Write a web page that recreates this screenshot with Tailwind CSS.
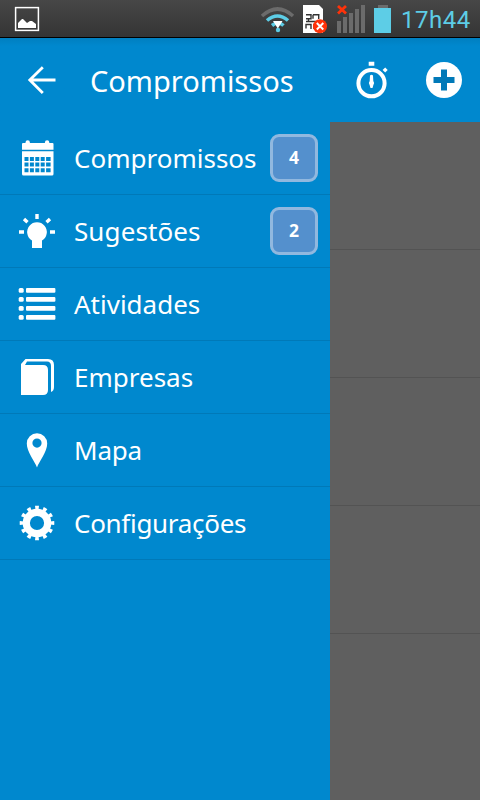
<!DOCTYPE html>
<html lang="pt">
<head>
<meta charset="utf-8">
<title>Compromissos</title>
<script src="https://cdn.jsdelivr.net/npm/@tailwindcss/browser@4"></script>
</head>
<body class="w-[480px] h-[800px] overflow-hidden flex flex-col bg-[#0088ce] text-white font-['Noto_Sans',sans-serif]">
<div class="h-[38px] shrink-0 flex items-center bg-linear-to-b from-[#474747] to-[#343434] border-b border-black">
  <svg class="w-[400px] h-[37px] shrink-0" viewBox="0 0 400 37">
    <rect x="15.600" y="7.600" width="22.800" height="22.800" fill="none" stroke="#fff" stroke-width="1.500"/>
    <path d="M18 28v-5l4-4h1l4 4 3-2h2l4 3v4z" fill="#fff"/>
    <g fill="none" stroke-width="3.600">
      <path d="M262 16q15.500-14 31 0" stroke="#6b6b6b"/>
      <path d="M267 20.500q10.500-9 21 0" stroke="#5dcde6"/>
      <path d="M272 25.500q6-5 11.500 0" stroke="#5dcde6"/>
    </g>
    <circle cx="278" cy="30" r="2.200" fill="#5dcde6"/>
    <path d="M273 21h9.500l-4.700 7.500z" fill="#fff"/>
    <path d="M303 5h16l4 4v24h-20z" fill="#fff"/>
    <path d="M306 14.700h5v4h-5M313 14.700v4M313 14.700h6.500M318.700 14v5M306 21.500h14M306 28.500v-4h5v4.500M314 29v-4.500h4M308.500 18v3.500" fill="none" stroke="#333" stroke-width="1.400"/>
    <circle cx="320" cy="26.300" r="7" fill="#ff3209"/>
    <path d="M316.800 23l6.500 6.500M323.300 23l-6.500 6.500" stroke="#fff" stroke-width="1.900"/>
    <path d="M337 21h4v12h-4zM343 17h4v16h-4zM349 13h4v20h-4zM355 9h4v24h-4zM361 5h4v28h-4z" fill="#6b6b6b"/>
    <path d="M338 6l8 7.500M346 6l-8 7.500" stroke="#ff3209" stroke-width="2.800"/>
    <path d="M378 5h10v3h-10z" fill="#6b6b6b"/>
    <path d="M374 8h17v25h-17z" fill="#5dcde6"/>
  </svg>
  <span class="font-[Roboto] text-[24px] leading-none text-[#5dcde6] whitespace-nowrap ml-[1px] mt-[3px] tracking-[0.5px]">17h44</span>
</div>
<header class="h-[84px] shrink-0 flex items-center bg-linear-to-b from-[#007fc0] to-[#0088ce] to-[8px]">
  <svg class="w-[90px] h-[84px] shrink-0" viewBox="0 38 90 84"><path d="M42.800 67.300L29.800 80l13 12.900M30 80h25.500" fill="none" stroke="#fff" stroke-width="2.800"/></svg>
  <h1 class="w-[250px] text-[29px] leading-none whitespace-nowrap">Compromissos</h1>
  <svg class="w-[140px] h-[84px] shrink-0" viewBox="340 38 140 84">
    <circle cx="371.500" cy="83.200" r="13.100" fill="none" stroke="#fff" stroke-width="4"/>
    <path d="M368.700 61.800h5.600v3.900h-5.600zM370 75.500q1.500-1.500 3 0l.3 5.500q1.800 2.200 0 4.200l-.8 2.800h-2l-.8-2.800q-1.800-2 0-4.200z" fill="#fff"/>
    <path d="M382.600 69.900l2.600-2.500 2.500 2.500-2.500 2.600z" fill="#fff"/>
    <circle cx="444" cy="80" r="18" fill="#fff"/>
    <path d="M444 69.500v21M433.500 80h21" stroke="#0079b8" stroke-width="6"/>
  </svg>
</header>
<main class="flex flex-1 min-h-0">
  <nav class="w-[330px] shrink-0 bg-[#0088ce] text-[26px] leading-none whitespace-nowrap">
    <a class="h-[73px] flex items-center border-b border-[#0079b8]">
      <svg class="w-[74px] h-[72px] shrink-0" viewBox="0 122 74 72">
        <path d="M22 149.800v-5.800q0-1 1-1h2.500v-.5a2.200 2.200 0 0 1 4.400 0v.5h15v-.5a2.200 2.200 0 0 1 4.400 0v.5h3.200q1 0 1 1v5.800zM22 151.300h31.500v22.700q0 1.500-1.500 1.500h-28.500q-1.500 0-1.500-1.500z" fill="#fff"/>
        <g fill="#0088ce">
          <path id="cells" d="M24.500 157h4v4h-4zM29.900 157h4v4h-4zM35.300 157h4v4h-4zM40.700 157h4v4h-4zM46.100 157h4.500v4h-4.500z"/>
          <use href="#cells" y="5.500"/><use href="#cells" y="11.300"/>
        </g>
      </svg>
      <span>Compromissos</span>
      <b class="ml-auto mr-[12px] size-[48px] rounded-[9px] border-[3px] border-[#91b8df] bg-[#5490cd] flex items-center justify-center text-[17.5px]">4</b>
    </a>
    <a class="h-[73px] flex items-center border-b border-[#0079b8]">
      <svg class="w-[74px] h-[72px] shrink-0" viewBox="0 195 74 72">
        <path d="M32 248v-7.500a9.800 9.800 0 1 1 10 0v7.500z" fill="#fff"/>
        <path d="M37 214v5M19 232h5M50 232h5M24 219l3.500 3.200M50 219l-3.500 3.200" stroke="#fff" stroke-width="3.400"/>
      </svg>
      <span class="tracking-[0.1px]">Sugestões</span>
      <b class="ml-auto mr-[12px] size-[48px] rounded-[9px] border-[3px] border-[#91b8df] bg-[#5490cd] flex items-center justify-center text-[17.5px]">2</b>
    </a>
    <a class="h-[73px] flex items-center border-b border-[#0079b8]">
      <svg class="w-[74px] h-[72px] shrink-0" viewBox="0 268 74 72" fill="#fff">
        <g id="line"><rect x="18.700" y="288" width="5" height="4.800" rx="1.500"/><rect x="26" y="288" width="29.400" height="4.800" rx="1"/></g>
        <use href="#line" y="9"/><use href="#line" y="18"/><use href="#line" y="27"/>
      </svg>
      <span>Atividades</span>
    </a>
    <a class="h-[73px] flex items-center border-b border-[#0079b8]">
      <svg class="w-[74px] h-[72px] shrink-0" viewBox="0 341 74 72">
        <path d="M21 395v-31l4.500-5h22.500q6 0 6 6v22q0 4-3 5v-26q0-4.500-4-4.500h-20l-2 3.500h18q5 0 5 5v20q0 5-5 5z" fill="#fff"/>
      </svg>
      <span>Empresas</span>
    </a>
    <a class="h-[73px] flex items-center border-b border-[#0079b8]">
      <svg class="w-[74px] h-[72px] shrink-0" viewBox="0 414 74 72">
        <path fill-rule="evenodd" d="M37 467.500c-2-6-10.200-15.500-10.200-24a10.200 10.200 0 0 1 20.400 0c0 8.500-8.200 18-10.200 24zM37 438.500a4.600 4.600 0 1 0 0 9.200 4.600 4.600 0 0 0 0-9.200z" fill="#fff"/>
      </svg>
      <span class="tracking-[-0.2px]">Mapa</span>
    </a>
    <a class="h-[73px] flex items-center border-b border-[#0079b8]">
      <svg class="w-[74px] h-[72px] shrink-0" viewBox="0 487 74 72">
        <circle cx="37" cy="523" r="10.700" fill="none" stroke="#fff" stroke-width="7.200"/>
        <circle cx="37" cy="523" r="15.300" fill="none" stroke="#fff" stroke-width="4" pathLength="120" stroke-dasharray="4.600 5.400" stroke-dashoffset="2.300"/>
      </svg>
      <span class="tracking-[-0.3px]">Configurações</span>
    </a>
  </nav>
  <section class="flex-1 bg-[#5f5f5f]">
    <div class="h-[128px] border-b border-[#535353]"></div>
    <div class="h-[128px] border-b border-[#535353]"></div>
    <div class="h-[128px] border-b border-[#535353]"></div>
    <div class="h-[128px] border-b border-[#535353]"></div>
  </section>
</main>
</body>
</html>
